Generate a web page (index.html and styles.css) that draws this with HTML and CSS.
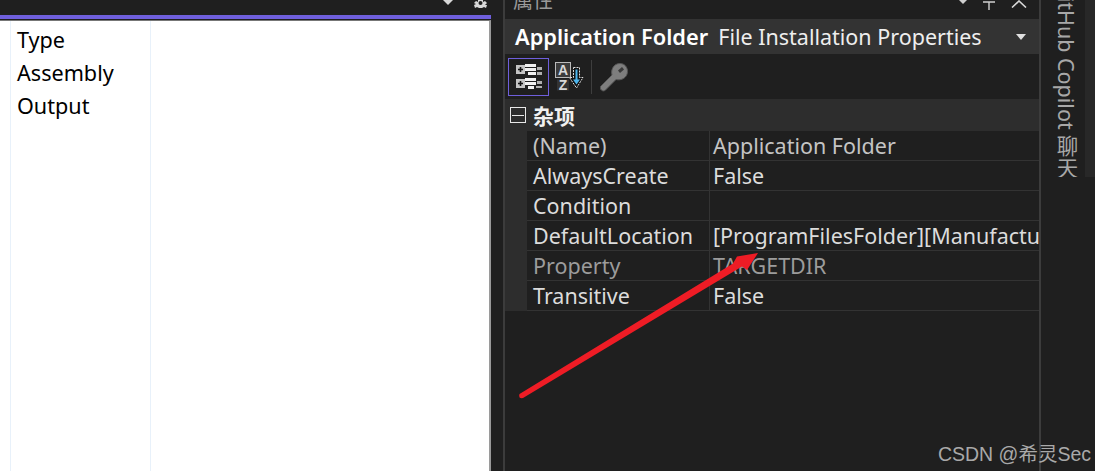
FILE: index.html
```html
<!DOCTYPE html>
<html lang="zh">
<head>
<meta charset="utf-8">
<title>Properties</title>
<link rel="stylesheet" href="styles.css">
</head>
<body>
<div class="app">
  <section class="left">
    <div class="left-head">
      <svg width="12" height="6" viewBox="0 0 12 6"><path d="M1 0h10L6 5z" fill="#d8d8d8"/></svg>
      <svg width="15" height="9" viewBox="0 0 15 9"><path d="M5 0h5v2l2-1 2 2-2 2h2v0l-1 3-2-1-2 1H6L4 7 2 8 1 5 3 4 1 3l2-2 2 1z" fill="#d8d8d8"/><circle cx="7.500" cy="3" r="2" fill="#1f1f1f"/></svg>
    </div>
    <div class="accent"></div>
    <div class="doc">
      <div class="doc-names">
        <div class="doc-row">Type</div>
        <div class="doc-row">Assembly</div>
        <div class="doc-row">Output</div>
      </div>
    </div>
  </section>
  <div class="gutter"></div>
  <section class="props">
    <div class="props-head">
      <span class="props-title">属性</span>
      <span class="props-btns">
        <svg width="10" height="6" viewBox="0 0 10 6"><path d="M1 0h8L5 4z" fill="#d0d0d0"/></svg>
        <svg width="14" height="10" viewBox="0 0 14 10"><path d="M1 2h12M7 2v8" stroke="#d0d0d0" stroke-width="1.400" fill="none"/></svg>
        <svg width="18" height="8" viewBox="0 0 18 8"><path d="M2 7.500 9 1l7 6.500" stroke="#d8d8d8" stroke-width="1.600" fill="none"/></svg>
      </span>
    </div>
    <div class="selector">
      <b class="sel-name">Application Folder</b>
      <span class="sel-type">File Installation Properties</span>
      <svg class="sel-drop" width="10" height="6" viewBox="0 0 10 6"><path d="M0 0h10L5 6z" fill="#e0e0e0"/></svg>
    </div>
    <div class="toolbar">
      <div class="tool active">
        <svg width="28" height="28" viewBox="0 0 28 28">
          <rect x="1" y="2" width="9" height="9" fill="#c4c4c4"/><path d="M3 6.500h5M5.500 4v5" stroke="#111" stroke-width="1.600"/>
          <rect x="1" y="16" width="9" height="9" fill="#c4c4c4"/><path d="M3 20.500h5M5.500 18v5" stroke="#111" stroke-width="1.600"/>
          <path d="M10 1h11v3H10zM10 5h11v3H10zM13 9h8v3h-8zM10 15h11v3H10zM10 19h11v3H10zM13 23h6v3h-6z" fill="#f0f0f0"/>
          <path d="M22 4h5v3h-5zM22 9h5v3h-5zM22 18h5v3h-5zM21 23h6v2h-6z" fill="#b0b0b0"/>
        </svg>
      </div>
      <div class="tool">
        <svg width="30" height="32" viewBox="0 0 30 32">
          <rect x="1.500" y="1.500" width="15" height="15" fill="#3c3c3c" stroke="#bbb"/>
          <text x="9" y="14" class="az">A</text>
          <rect x="3" y="18.500" width="12" height="11" fill="#333"/>
          <text x="9" y="29" class="az">Z</text>
          <path d="M19.500 6.500h6v10h3.500L22.500 27l-7-10.500h4z" fill="#111" stroke="#ddd" stroke-dasharray="2 1"/>
          <path d="M21.500 8.500h2v10h2.500l-3.500 5-3.500-5h2.500z" fill="#4db5ec"/>
        </svg>
      </div>
      <span class="tool-sep"></span>
      <div class="tool key">
        <svg width="30" height="30" viewBox="0 0 30 30">
          <path d="M1.500 24.500 13 13c-1.500-5 1.500-11.500 8-11.500 5 0 7.500 4 7.500 8 0 6-6 9.500-11.500 8L6 28.500c-2 1-3.500 0-4.500-1.500z" fill="#7e7e7e" stroke="#565656"/>
          <path d="M19 8.500l4-3.500 2 2.500-4 3.500z" fill="#3a3a3a"/>
        </svg>
      </div>
    </div>
    <div class="category">
      <span class="collapse"></span>
      <b class="cat-name">杂项</b>
    </div>
    <div class="grid">
      <div class="name dim">(Name)</div><div class="val dim">Application Folder</div>
      <div class="name">AlwaysCreate</div><div class="val">False</div>
      <div class="name">Condition</div><div class="val"></div>
      <div class="name">DefaultLocation</div><div class="val">[ProgramFilesFolder][Manufacturer]\[ProductName]</div>
      <div class="name dim2">Property</div><div class="val dim2">TARGETDIR</div>
      <div class="name">Transitive</div><div class="val">False</div>
    </div>
  </section>
  <div class="divider"></div>
  <aside class="rail">
    <div class="rail-tab"><span class="rail-text">GitHub Copilot 聊天</span></div>
    <div class="rail-strip"></div>
  </aside>
</div>
<svg class="arrow" width="1095" height="471" viewBox="0 0 1095 471">
  <path d="M519.500 394 733 263.500 737 256.500 758 253 747 270 742 266.500 523 398Q518 399 519.500 394z" fill="#ee1c25"/>
</svg>
<div class="mark">CSDN @希灵Sec</div>
</body>
</html>
```
FILE: styles.css
```css
html, body {
  margin: 0;
  padding: 0;
  width: 1095px;
  height: 471px;
  overflow: hidden;
  background: #1f1f1f;
}
body {
  position: relative;
  font-family: "Noto Sans", "Noto Sans CJK SC", sans-serif;
  font-size: 16px;
}
.app {
  display: flex;
  height: 471px;
}
.left {
  width: 491px;
  display: flex;
  flex-direction: column;
}
.left-head {
  height: 15px;
  display: flex;
  justify-content: flex-end;
  align-items: flex-start;
  gap: 19px;
  padding-right: 3px;
  box-sizing: border-box;
}
.accent {
  height: 4px;
  background: #6f5fdc;
}
.doc {
  flex: 1;
  background: #fff;
  border-top: 1px solid #777;
  border-right: 2px solid #9a9a9a;
  margin-top: 1px;
  padding-left: 10px;
  box-sizing: border-box;
  display: flex;
  color: #000;
  font-size: 21.600px;
}
.doc-names {
  width: 141px;
  border-left: 1px solid #e8f1fa;
  border-right: 1px solid #e8f1fa;
  padding-left: 6px;
  padding-top: 2px;
  box-sizing: border-box;
}
.doc-row {
  height: 33px;
  line-height: 33px;
}
.gutter {
  width: 12px;
  border-right: 2px solid #3c3c3c;
}
.props {
  width: 534px;
  display: flex;
  flex-direction: column;
  overflow: hidden;
  color: #dcdcdc;
  font-size: 21.500px;
}
.props-head {
  height: 19px;
  display: flex;
  justify-content: space-between;
  overflow: hidden;
}
.props-title {
  margin-left: 8px;
  margin-top: -14px;
  line-height: 30px;
  font-size: 20px;
  color: #999;
}
.props-btns {
  display: flex;
  align-items: flex-start;
  gap: 14px;
  padding-right: 11px;
}
.selector {
  height: 35px;
  background: #333333;
  display: flex;
  align-items: center;
  padding-left: 10px;
  color: #fff;
  white-space: nowrap;
}
.sel-name { font-size: 21.800px; font-weight: 600; }
.sel-type { margin-left: 10px; font-size: 21.500px; color: #eee; }
.sel-drop { margin-left: auto; margin-right: 13px; }
.toolbar {
  height: 45px;
  display: flex;
  align-items: center;
  padding-left: 3px;
  gap: 4px;
}
.tool {
  width: 32px;
  height: 34px;
  display: flex;
  align-items: center;
  justify-content: center;
  box-sizing: border-box;
}
.tool.active {
  border: 1px solid #6f5fdc;
  width: 41px;
  height: 38px;
}
.tool.key {
  margin-left: 2px;
}
.tool-sep {
  width: 1px;
  height: 34px;
  margin-left: 2px;
  background: #3e3e3e;
}
.az {
  font: bold 14px "Liberation Sans", sans-serif;
  fill: #d8d8d8;
  text-anchor: middle;
}
.category {
  height: 32px;
  background: #2d2d2d;
  display: flex;
  align-items: center;
  padding-left: 5px;
  gap: 7px;
  color: #f0f0f0;
}
.collapse {
  width: 16px;
  height: 16px;
  border: 1px solid #e8e8e8;
  box-sizing: border-box;
  display: flex;
  align-items: center;
  justify-content: center;
}
.collapse::before {
  content: "";
  width: 12px;
  height: 1px;
  background: #e8e8e8;
}
.cat-name { font-size: 21px; font-weight: 700; }
.grid {
  display: grid;
  grid-template-columns: 183px 1fr;
  grid-auto-rows: 30px;
  padding-left: 22px;
  background: #2d2d2d;
}
.name, .val {
  line-height: 29px;
  height: 30px;
  box-sizing: border-box;
  background: #1f1f1f;
  border-bottom: 1px solid #333;
  white-space: nowrap;
  overflow: hidden;
  padding-left: 6px;
}
.name { border-right: 1px solid #333; }
.val { padding-left: 3px; }
.dim { color: #c4c4c4; }
.dim2 { color: #9c9c9c; }
.divider {
  width: 2px;
  background: #3c3c3c;
}
.rail {
  flex: 1;
  display: flex;
  align-items: flex-start;
}
.rail-tab {
  width: 44px;
  height: 177px;
  position: relative;
  overflow: hidden;
}
.rail-strip {
  width: 10px;
  height: 177px;
  background: #282828;
}
.rail-text {
  position: absolute;
  right: 3px;
  bottom: -1px;
  writing-mode: vertical-rl;
  white-space: nowrap;
  color: #a8a8a8;
  font-size: 21.500px;
}
.arrow {
  position: absolute;
  left: 0;
  top: 0;
  pointer-events: none;
}
.mark {
  position: absolute;
  right: 4px;
  bottom: 6px;
  font-family: "Liberation Sans", "Noto Sans CJK SC", sans-serif;
  font-size: 19.500px;
  line-height: 22px;
  color: #a9a9a9;
  white-space: nowrap;
}
```
